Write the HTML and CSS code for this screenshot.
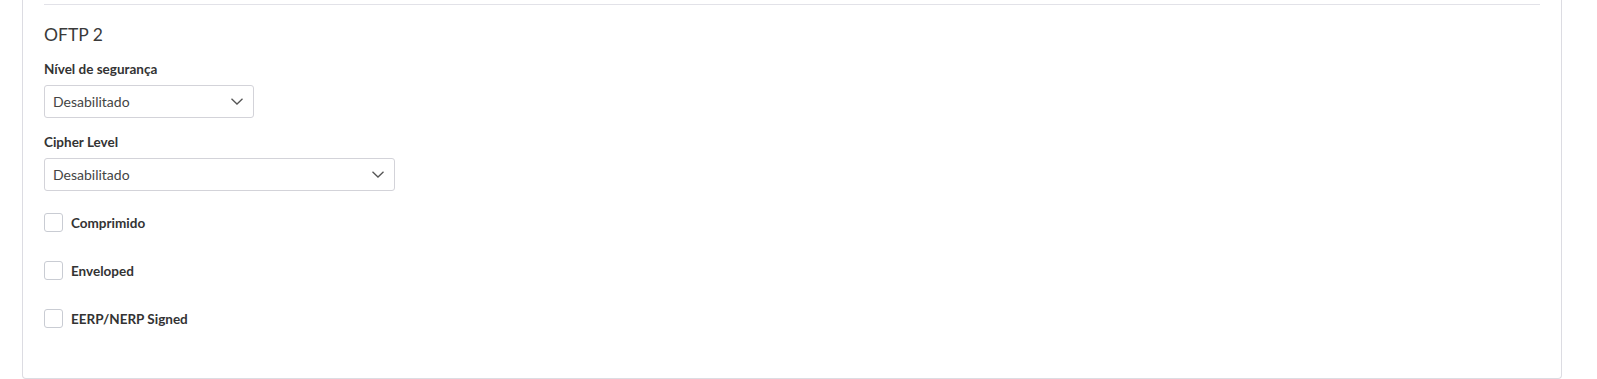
FILE: index.html
```html
<!DOCTYPE html>
<html lang="pt">
<head>
  <meta charset="UTF-8" />
  <meta name="viewport" content="width=device-width, initial-scale=1.0"/>
  <title>OFTP 2</title>
  <link rel="stylesheet" href="styles.css">
</head>
<body>
  <div class="card">
    <div class="divider"></div>

    <h3 class="section-title">OFTP 2</h3>

    <div class="field">
      <label class="field-label">Nível de segurança</label>
      <div class="select select-short">
        <span>Desabilitado</span>
        <svg class="chevron" viewBox="0 0 12 7" width="12" height="7"><path d="M0.5 0.8 L6 6 L11.5 0.8" fill="none" stroke="#555" stroke-width="1.3"/></svg>
      </div>
    </div>

    <div class="field">
      <label class="field-label">Cipher Level</label>
      <div class="select select-wide">
        <span>Desabilitado</span>
        <svg class="chevron" viewBox="0 0 12 7" width="12" height="7"><path d="M0.5 0.8 L6 6 L11.5 0.8" fill="none" stroke="#555" stroke-width="1.3"/></svg>
      </div>
    </div>

    <div class="checks">
      <label class="check"><span class="box"></span><span>Comprimido</span></label>
      <label class="check"><span class="box"></span><span>Enveloped</span></label>
      <label class="check"><span class="box"></span><span>EERP/NERP Signed</span></label>
    </div>
  </div>
</body>
</html>
```

FILE: styles.css
```css
body {
  margin: 0;
  background: #fff;
  font-family: 'Lato', 'Open Sans', sans-serif;
  color: #333;
}

.card {
  margin: 0 35px 0 22px;
  border: 1px solid #dcdce2;
  border-top: none;
  border-radius: 0 0 4px 4px;
  padding: 4px 21px 50px 21px;
  background: #fff;
}

.divider {
  height: 1px;
  background: #e2e2e8;
}

.section-title {
  margin: 20px 0 0 0;
  font-size: 17.5px;
  line-height: 20px;
  font-weight: 400;
  color: #3a3a3a;
}

.field {
  display: flex;
  flex-direction: column;
  align-items: flex-start;
  margin-top: 14px;
}

.field-label {
  font-size: 13.5px;
  line-height: 20px;
  font-weight: 700;
  color: #333;
  margin-bottom: 6px;
}

.select {
  box-sizing: border-box;
  height: 33px;
  border: 1px solid #d3d3d9;
  border-radius: 3px;
  display: flex;
  align-items: center;
  justify-content: space-between;
  padding: 0 10px 0 8px;
  font-size: 14px;
  color: #444;
}

.select-short {
  width: 210px;
}

.select-wide {
  width: 351px;
}

.chevron {
  display: block;
}

.checks {
  display: flex;
  flex-direction: column;
  gap: 29px;
  margin-top: 22px;
}

.check {
  display: flex;
  align-items: center;
  gap: 8px;
  font-size: 13.5px;
  font-weight: 700;
  color: #333;
}

.box {
  box-sizing: border-box;
  width: 19px;
  height: 19px;
  border: 1.5px solid #c9ccd3;
  border-radius: 3px;
}
```
